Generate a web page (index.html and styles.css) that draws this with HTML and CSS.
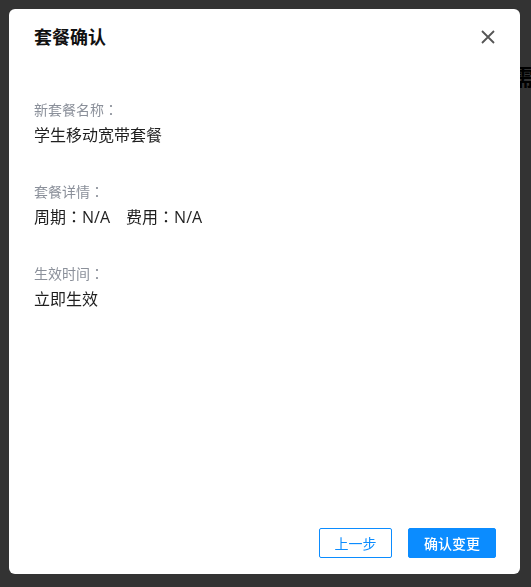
FILE: index.html
```html
<!DOCTYPE html>
<html lang="zh-CN">
<head>
<meta charset="utf-8">
<title>套餐变更</title>
<link rel="stylesheet" href="styles.css">
</head>
<body>
<div class="page">
  <h2 class="page-title">需求变更</h2>
</div>
<div class="mask">
  <div class="dialog">
    <div class="dialog-header">
      <h3 class="dialog-title">套餐确认</h3>
      <button class="dialog-close" type="button" aria-label="关闭">
        <svg width="14" height="14" viewBox="0 0 14 14"><path d="M1 1L13 13M13 1L1 13" stroke="#555" stroke-width="1.8" fill="none"/></svg>
      </button>
    </div>
    <div class="dialog-body">
      <div class="field">
        <div class="field-label">新套餐名称<span class="colon" lang="zh-Hant">：</span></div>
        <div class="field-value">学生移动宽带套餐</div>
      </div>
      <div class="field">
        <div class="field-label">套餐详情<span class="colon" lang="zh-Hant">：</span></div>
        <div class="field-value">周期<span class="colon" lang="zh-Hant">：</span>N/A<span class="sep"></span>费用<span class="colon" lang="zh-Hant">：</span>N/A</div>
      </div>
      <div class="field">
        <div class="field-label">生效时间<span class="colon" lang="zh-Hant">：</span></div>
        <div class="field-value">立即生效</div>
      </div>
    </div>
    <div class="dialog-footer">
      <button class="btn btn-outline" type="button">上一步</button>
      <button class="btn btn-primary" type="button">确认变更</button>
    </div>
  </div>
</div>
</body>
</html>
```
FILE: styles.css
```css
html, body {
  margin: 0;
  height: 100%;
  overflow: hidden;
}
body {
  background: #fff;
  font-family: "Open Sans", "Noto Sans CJK SC", sans-serif;
}
.page {
  padding-top: 62px;
  padding-left: 512px;
  white-space: nowrap;
}
.page-title {
  margin: 0;
  font-size: 22px;
  line-height: 28px;
  font-weight: 700;
  color: #000;
}
.mask {
  position: fixed;
  inset: 0;
  background: rgba(0, 0, 0, 0.8);
  padding: 9px 11px 13px 9px;
  display: flex;
}
.dialog {
  flex: 1;
  background: #fff;
  border-radius: 6px;
  display: flex;
  flex-direction: column;
}
.dialog-header {
  display: flex;
  align-items: center;
  justify-content: space-between;
  padding: 16px 25px 16px 25px;
}
.dialog-title {
  margin: 0;
  font-size: 18px;
  line-height: 24px;
  font-weight: 700;
  color: #111;
}
.dialog-close {
  border: 0;
  background: none;
  padding: 0;
  width: 14px;
  height: 14px;
  display: block;
  cursor: pointer;
}
.dialog-close svg { display: block; }
.dialog-body {
  padding: 35px 25px 0;
  display: flex;
  flex-direction: column;
  gap: 36px;
}
/* full-width colon, centred in its em box */
.colon {
  font-family: "Noto Sans CJK TC", sans-serif;
  line-height: 0;
}
.field-label {
  font-size: 14px;
  line-height: 20px;
  color: #8b909a;
  margin-bottom: 4px;
}
.field-value {
  font-size: 16px;
  line-height: 22px;
  color: #1f1f1f;
}
.sep {
  display: inline-block;
  width: 16px;
}
.dialog-footer {
  margin-top: auto;
  display: flex;
  justify-content: flex-end;
  gap: 16px;
  padding: 0 24px 16px;
}
.btn {
  height: 30px;
  box-sizing: border-box;
  font-family: inherit;
  font-size: 14px;
  border-radius: 2px;
  cursor: pointer;
  padding: 0;
}
.btn-outline {
  width: 73px;
  background: #fff;
  border: 1px solid #0b8cff;
  color: #0b8cff;
}
.btn-primary {
  width: 88px;
  background: #0b8cff;
  border: 1px solid #0b8cff;
  color: #fff;
  font-weight: 500;
}
```
